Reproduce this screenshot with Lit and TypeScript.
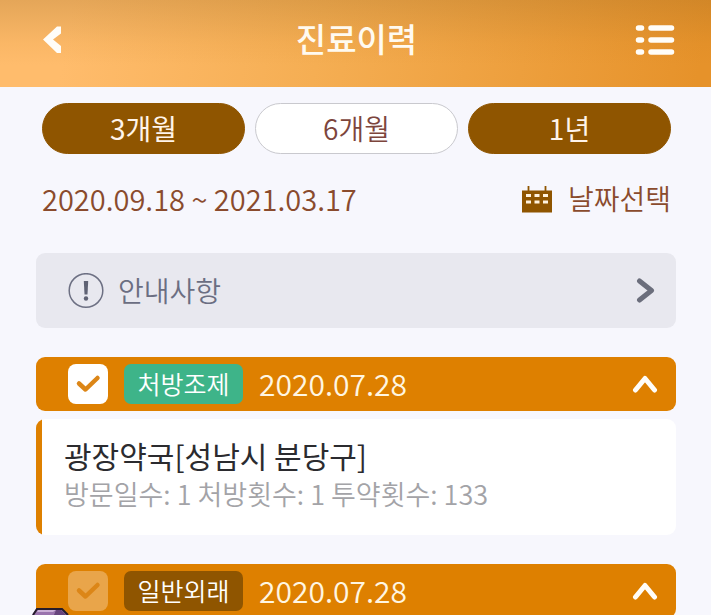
import { LitElement, html, css, svg, nothing } from "lit";
import { customElement, property, state } from "lit/decorators.js";
import { classMap } from "lit/directives/class-map.js";

interface Visit {
  kind: string;
  tone: "green" | "brown";
  date: string;
  selected: boolean;
  place?: string;
  detail?: string;
}

const backIcon = html`<svg width="20" height="28" viewBox="0 0 20 28" aria-hidden="true">
  <path d="M19 0.500V7.500L11 13.500 19 20V27H15L1 13.500 15 0.500z" fill="#fffdf8" />
</svg>`;

const listIcon = html`<svg width="40" height="32" viewBox="0 0 40 32" aria-hidden="true">
  ${[4, 16, 28].map(
    (y) => svg`<path d="M3.5 ${y}h3M16 ${y}h20.500" fill="none" stroke="#fffdf8" stroke-width="5.500" stroke-linecap="round" />`
  )}
</svg>`;

const calendarIcon = html`<svg width="30" height="32" viewBox="0 -4 30 32" aria-hidden="true">
  <path d="M6.500 0v6M23.500 0v6" stroke="#8f5500" stroke-width="1.800" />
  <rect x="0" y="4.500" width="30" height="22" fill="#8f5500" />
  <path d="M4 9.500h5M12.500 9.500h5M21 9.500h5M4 16h5M12.500 16h5M21 16h5" stroke="#fff3df" stroke-width="3" />
</svg>`;

const noticeIcon = html`<svg width="36" height="36" viewBox="0 0 36 36" aria-hidden="true">
  <circle cx="18" cy="17.500" r="16.800" fill="none" stroke="#6d7083" stroke-width="1.500" />
  <path d="M15.800 8h4.400l-.7 13.500h-3z" fill="#5f6274" />
  <circle cx="18" cy="25.500" r="2.200" fill="#5f6274" />
</svg>`;

const rightIcon = html`<svg width="20" height="28" viewBox="0 0 20 28" aria-hidden="true">
  <path d="M3.500 4 15.500 13.500 3.500 23" fill="none" stroke="#6b6e7c" stroke-width="5" stroke-linecap="round" stroke-linejoin="round" />
</svg>`;

const upIcon = html`<svg width="26" height="20" viewBox="0 0 26 20" aria-hidden="true">
  <path d="M3.500 16 13 4.500 22.500 16" fill="none" stroke="#fffdf8" stroke-width="5" stroke-linecap="round" stroke-linejoin="round" />
</svg>`;

@customElement("visit-card")
export class VisitCard extends LitElement {
  @property({ attribute: false }) visit!: Visit;
  @state() private open = true;

  static styles = css`
    :host { display: block; }
    .head {
      display: flex;
      align-items: center;
      height: 54px;
      padding: 0 18px 0 32px;
      box-sizing: border-box;
      border-radius: 9px;
      background: #de8000;
      color: #fff6e2;
    }
    .pick { display: grid; width: 40px; height: 40px; margin-right: 16px; }
    .pick > * { grid-area: 1 / 1; }
    .box {
      appearance: none;
      width: 40px;
      height: 40px;
      margin: 0;
      border-radius: 8px;
      background: #e9a54a;
    }
    .box:checked { background: #fff; }
    .tick { pointer-events: none; color: #dc8617; }
    .tag {
      display: flex;
      justify-content: center;
      width: 119px;
      height: 40px;
      border-radius: 7px;
      font-size: 25px;
      line-height: 38px;
      font-weight: 350;
      color: #fff;
    }
    .green { background: #3eb489; }
    .brown { background: #8f5500; }
    .date { flex: 1; height: 40px; margin-left: 16px; font-size: 30px; line-height: 38px; font-weight: 350; }
    .toggle { display: flex; padding: 0; border: 0; background: none; }
    .body {
      margin-top: 8px;
      padding: 16px 28px 22px;
      border-radius: 9px;
      background: linear-gradient(to right, #de8000 6px, #fff 6px);
    }
    .place { margin: 0; font-size: 30px; line-height: 40px; font-weight: 400; color: #2b2b2f; }
    .detail { margin: 0; font-size: 27px; line-height: 38px; font-weight: 350; color: #a3a3a7; }
  `;

  render() {
    const v = this.visit;
    return html`
      <div class="head">
        <label class="pick">
          <input class="box" type="checkbox" aria-label="${v.kind} ${v.date}" .checked=${v.selected} />
          <svg class="tick" width="40" height="40" viewBox="0 0 40 40" aria-hidden="true">
            <path d="M11 19.500 17.500 25.500 29.500 14" fill="none" stroke="currentColor" stroke-width="4.500" stroke-linecap="round" stroke-linejoin="round" />
          </svg>
        </label>
        <span class=${classMap({ tag: true, green: v.tone === "green", brown: v.tone === "brown" })}>${v.kind}</span>
        <time class="date">${v.date}</time>
        <button class="toggle" aria-label="접기" aria-expanded=${this.open} @click=${() => (this.open = !this.open)}>${upIcon}</button>
      </div>
      ${this.open && v.place
        ? html`<div class="body">
            <h2 class="place">${v.place}</h2>
            <p class="detail">${v.detail}</p>
          </div>`
        : nothing}
    `;
  }
}

@customElement("app-root")
export class AppRoot extends LitElement {
  @state() private period = "6개월";

  private visits: Visit[] = [
    {
      kind: "처방조제", tone: "green", date: "2020.07.28", selected: true,
      place: "광장약국[성남시 분당구]", detail: "방문일수: 1 처방횟수: 1 투약횟수: 133",
    },
    { kind: "일반외래", tone: "brown", date: "2020.07.28", selected: false },
  ];

  static styles = css`
    :host {
      display: block;
      position: relative;
      height: 100vh;
      overflow: hidden;
      background: #f7f7fd;
      font-family: "Noto Sans CJK KR", "Noto Sans", sans-serif;
    }
    button { font-family: inherit; cursor: pointer; }
    .bar {
      display: grid;
      grid-template-columns: 36px 1fr 40px;
      align-items: center;
      height: 87px;
      padding: 0 36px 8px 42px;
      box-sizing: border-box;
      background:
        linear-gradient(180deg, rgba(150, 100, 30, 0.25), rgba(190, 120, 30, 0.08) 50%, transparent 75%),
        linear-gradient(100deg, #ffbc6c 10%, #f5ae53 45%, #e6922a 98%);
    }
    .icon { display: flex; padding: 0; border: 0; background: none; }
    .title { margin: 0; padding-bottom: 4px; text-align: center; font-size: 33px; line-height: 44px; font-weight: 500; color: #fffaf0; }
    .periods { display: grid; grid-template-columns: repeat(3, 1fr); gap: 10px; padding: 16px 40px 0 42px; }
    .period {
      height: 51px;
      padding: 0 0 2px;
      border: 1px solid #8f5500;
      border-radius: 26px;
      background: #8f5500;
      color: #fff4ea;
      font-size: 28px;
      line-height: 40px;
    }
    .current { border-color: #c9c9ce; background: #fff; color: #7d453c; font-weight: 350; }
    .range {
      display: flex;
      align-items: center;
      justify-content: space-between;
      padding: 22px 40px 0 42px;
      color: #8a4b2d;
      font-size: 29px;
      line-height: 44px;
      font-weight: 350;
    }
    .choose {
      display: flex;
      align-items: center;
      gap: 16px;
      padding: 0;
      border: 0;
      background: none;
      color: inherit;
      font-size: 28px;
      line-height: 44px;
      font-weight: 350;
    }
    .content { display: flex; flex-direction: column; gap: 29px; padding: 33px 35px 0 36px; }
    .notice {
      display: flex;
      align-items: center;
      gap: 14px;
      height: 75px;
      padding: 0 20px 0 32px;
      border: 0;
      border-radius: 9px;
      background: #e8e8ef;
      color: #6b6e82;
      font-size: 28px;
      line-height: 44px;
      font-weight: 350;
      text-align: left;
    }
    .label { flex: 1; padding-bottom: 2px; }
    .gem { position: absolute; left: 32px; bottom: 0; }
  `;

  render() {
    return html`
      <header class="bar">
        <button class="icon" aria-label="뒤로">${backIcon}</button>
        <h1 class="title">진료이력</h1>
        <button class="icon" aria-label="메뉴">${listIcon}</button>
      </header>
      <nav class="periods">
        ${["3개월", "6개월", "1년"].map(
          (p) => html`<button
            class=${classMap({ period: true, current: p === this.period })}
            aria-pressed=${p === this.period}
            @click=${() => (this.period = p)}
          >${p}</button>`
        )}
      </nav>
      <div class="range">
        <span>2020.09.18 ~ 2021.03.17</span>
        <button class="choose">${calendarIcon}날짜선택</button>
      </div>
      <main class="content">
        <button class="notice">${noticeIcon}<span class="label">안내사항</span>${rightIcon}</button>
        ${this.visits.map((v) => html`<visit-card .visit=${v}></visit-card>`)}
      </main>
      <svg class="gem" width="38" height="7" viewBox="0 0 38 7" aria-hidden="true">
        <path d="M0 7 4 1h26l6 6z" fill="#9a74ad" />
        <path d="M6 2h18l-3 2H5z" fill="#cbb0d6" />
        <path d="M24 2h5l5 5H22z" fill="#67457c" />
        <path d="M1 7 5 1h25l6 6" fill="none" stroke="#251c2b" stroke-width="2" />
      </svg>
    `;
  }
}
